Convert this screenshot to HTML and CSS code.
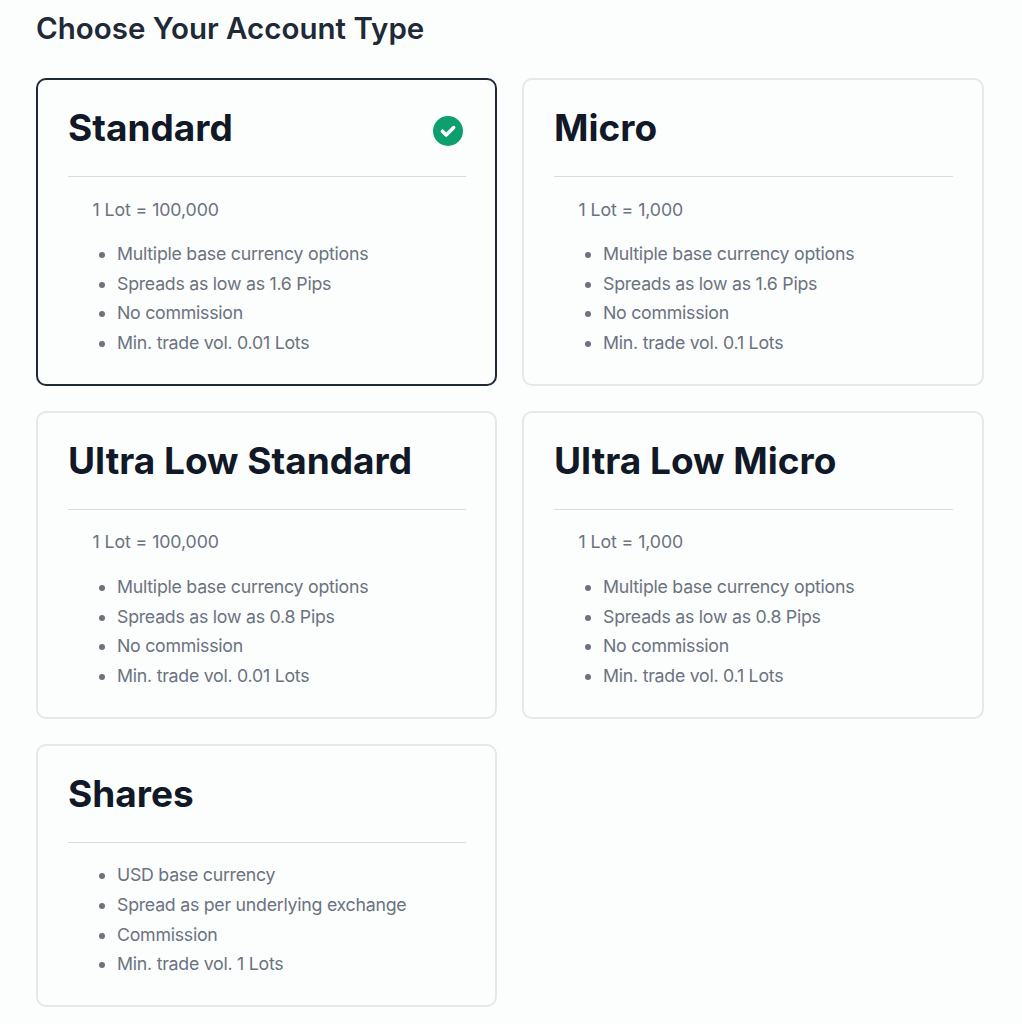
FILE: index.html
```html
<!DOCTYPE html>
<html lang="en">
<head>
  <meta charset="UTF-8">
  <meta name="viewport" content="width=device-width, initial-scale=1.0">
  <title>Choose Your Account Type</title>
  <link rel="stylesheet" href="styles.css">
</head>
<body>
  <main>
    <h1>Choose Your Account Type</h1>

    <div class="accounts">
      <!-- Standard (selected) -->
      <section class="card selected">
        <div class="card-header">
          <h2>Standard</h2>
          <svg class="check" viewBox="0 0 30 30" aria-hidden="true">
            <circle cx="15" cy="15" r="15" fill="#0e9f6e"/>
            <path d="M9.4 15.2L13.2 19L20.7 11.6" fill="none" stroke="#fff" stroke-width="3.5" stroke-linecap="round" stroke-linejoin="round"/>
          </svg>
        </div>
        <div class="card-body">
          <p>1 Lot = 100,000</p>
          <ul>
            <li>Multiple base currency options</li>
            <li>Spreads as low as 1.6 Pips</li>
            <li>No commission</li>
            <li>Min. trade vol. 0.01 Lots</li>
          </ul>
        </div>
      </section>

      <!-- Micro -->
      <section class="card">
        <div class="card-header">
          <h2>Micro</h2>
        </div>
        <div class="card-body">
          <p>1 Lot = 1,000</p>
          <ul>
            <li>Multiple base currency options</li>
            <li>Spreads as low as 1.6 Pips</li>
            <li>No commission</li>
            <li>Min. trade vol. 0.1 Lots</li>
          </ul>
        </div>
      </section>

      <!-- Ultra Low Standard -->
      <section class="card">
        <div class="card-header">
          <h2>Ultra Low Standard</h2>
        </div>
        <div class="card-body">
          <p>1 Lot = 100,000</p>
          <ul>
            <li>Multiple base currency options</li>
            <li>Spreads as low as 0.8 Pips</li>
            <li>No commission</li>
            <li>Min. trade vol. 0.01 Lots</li>
          </ul>
        </div>
      </section>

      <!-- Ultra Low Micro -->
      <section class="card">
        <div class="card-header">
          <h2>Ultra Low Micro</h2>
        </div>
        <div class="card-body">
          <p>1 Lot = 1,000</p>
          <ul>
            <li>Multiple base currency options</li>
            <li>Spreads as low as 0.8 Pips</li>
            <li>No commission</li>
            <li>Min. trade vol. 0.1 Lots</li>
          </ul>
        </div>
      </section>

      <!-- Shares -->
      <section class="card">
        <div class="card-header">
          <h2>Shares</h2>
        </div>
        <div class="card-body">
          <ul>
            <li>USD base currency</li>
            <li>Spread as per underlying exchange</li>
            <li>Commission</li>
            <li>Min. trade vol. 1 Lots</li>
          </ul>
        </div>
      </section>
    </div>
  </main>
</body>
</html>
```

FILE: styles.css
```css
/* Styles */
* {
  box-sizing: border-box;
}

body {
  margin: 0;
  background: #fcfefd;
  color: #6b7280;
  font-family: Inter, "Liberation Sans", sans-serif;
}

main {
  padding: 10px 38px 17px 36px;
}

h1, h2, p, ul {
  margin: 0;
}

h1 {
  margin-bottom: 31px;
  font-size: 29.5px;
  font-weight: 600;
  line-height: 37px;
  color: #1f2937;
}

/* Cards */
.accounts {
  display: grid;
  grid-template-columns: 461px 1fr;
  gap: 25px;
}

.card {
  padding: 27px 29px 26px 30px;
  border: 2px solid #e5e7eb;
  border-radius: 10px;
}

.card.selected {
  border-color: #1f2937;
}

.card-header {
  display: flex;
  justify-content: space-between;
  align-items: flex-start;
  height: 70px;
  border-bottom: 1px solid #d8dce1;
}

.card-header h2 {
  font-size: 37px;
  font-weight: 700;
  line-height: 42px;
  color: #111827;
}

.check {
  width: 30px;
  height: 30px;
  margin: 9px 3px 0 0;
}

.card-body {
  padding: 17.5px 0 0.5px 24.5px;
  font-size: 17.75px;
  font-weight: 400;
  line-height: 29.6px;
}

.card-body p {
  margin-bottom: 15px;
  letter-spacing: -0.1px;
}

.card-body ul {
  padding-left: 24.5px;
  letter-spacing: -0.26px;
}
```
